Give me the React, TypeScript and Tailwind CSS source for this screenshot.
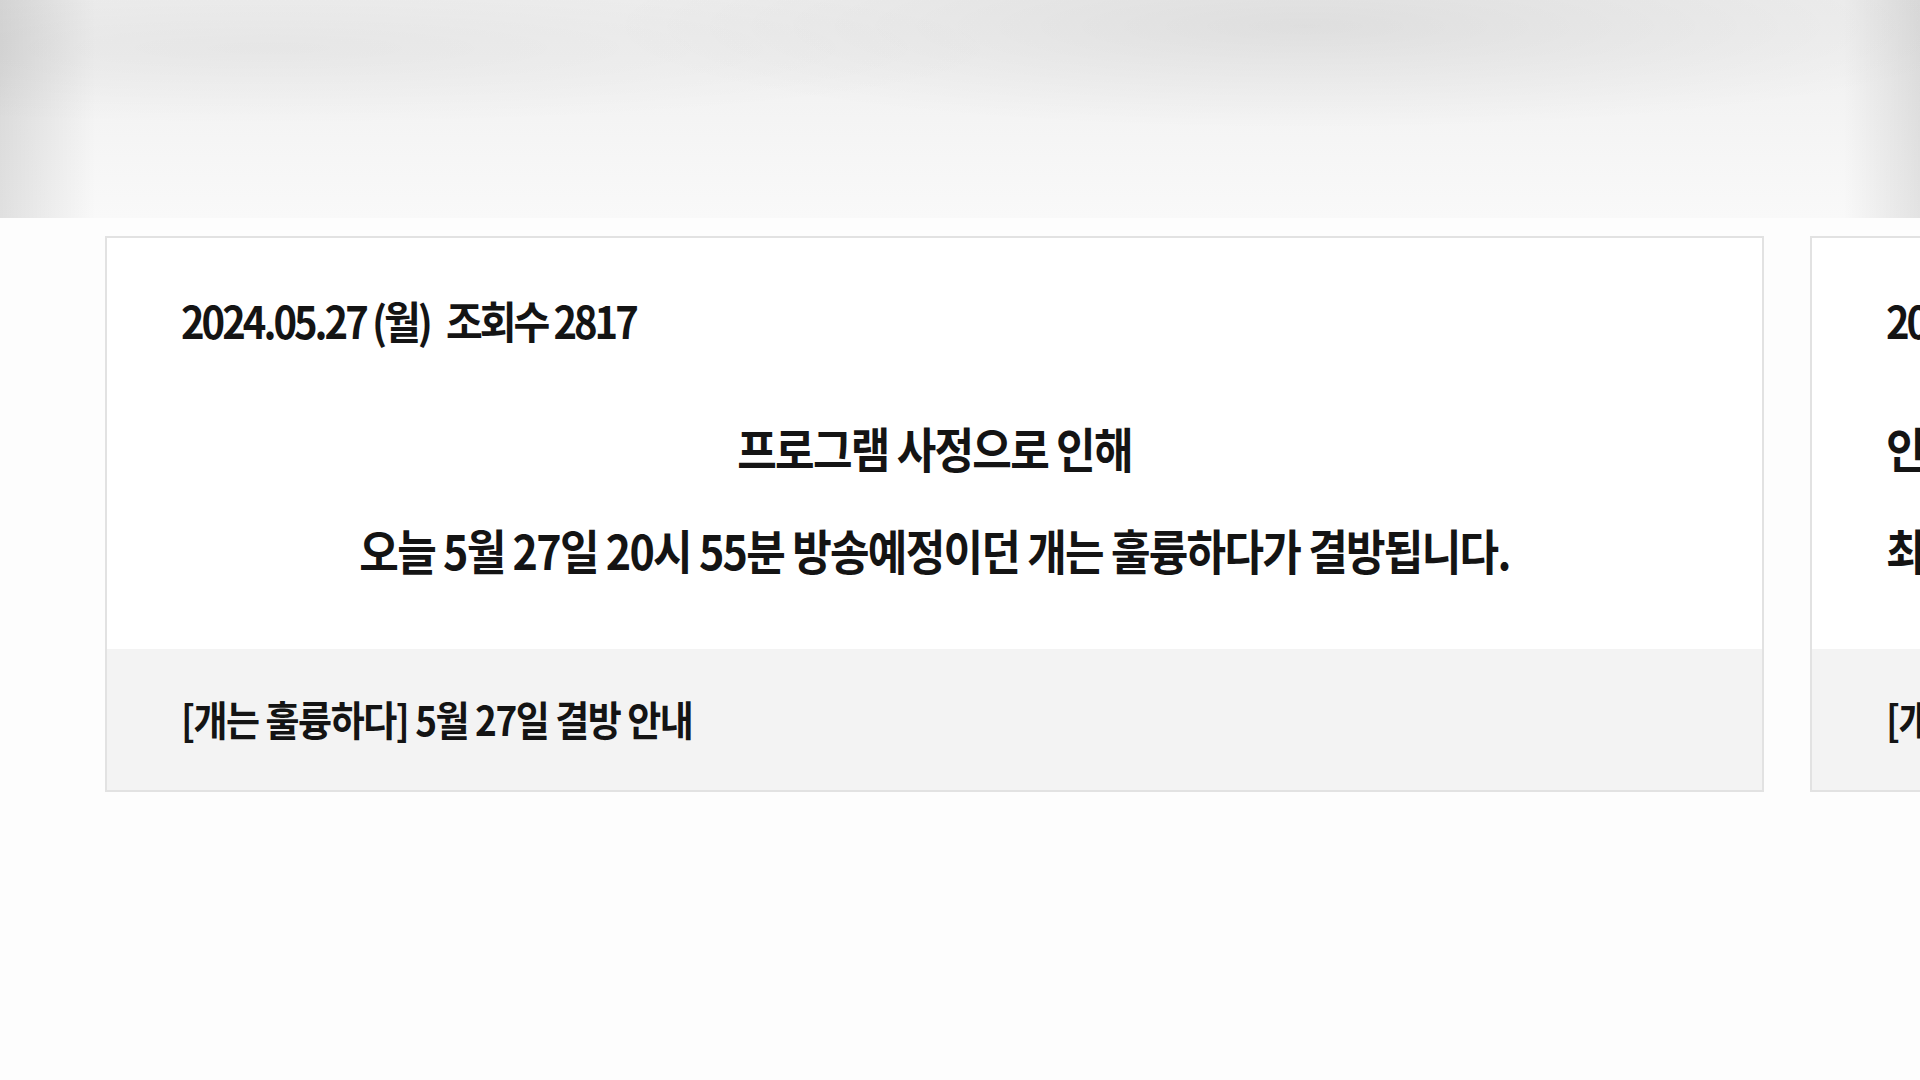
const font = "font-['Noto_Sans_CJK_KR','Noto_Sans',sans-serif]";

interface Notice {
  date: string;
  views: number;
  lines: string[];
  title: string;
  alignStart?: boolean;
}

const notices: Notice[] = [
  {
    date: '2024.05.27 (월)',
    views: 2817,
    lines: ['프로그램 사정으로 인해', '오늘 5월 27일 20시 55분 방송예정이던 개는 훌륭하다가 결방됩니다.'],
    title: '[개는 훌륭하다] 5월 27일 결방 안내',
  },
  {
    date: '2024.05.20 (월)',
    views: 3104,
    lines: ['인천 지역 특집 방송 편성으로 인해', '최근 공지된 방송 일정이 일부 변경되었으니 시청에 참고 부탁드립니다.'],
    title: '[개는 훌륭하다] 방송 시간 변경 안내',
    alignStart: true,
  },
];

function NoticeCard({ notice }: { notice: Notice }) {
  return (
    <div className="w-[1659px] shrink-0 border-2 border-[#e2e2e2] bg-white flex flex-col">
      {/* body */}
      <div className="h-[411px] px-[74px] pt-[58px]">
        <div className="flex text-[40px] leading-[48px] font-bold tracking-[-0.075em] text-[#141414] scale-y-110 origin-left whitespace-nowrap">
          <span>{notice.date}</span>
          <span className="ml-[16px]">조회수 {notice.views}</span>
        </div>
        <div
          className={`mt-[79px] flex flex-col gap-[54px] text-[43px] leading-[48px] font-bold tracking-[-0.04em] text-[#141414] ${
            notice.alignStart ? 'items-start' : 'items-center'
          }`}
        >
          {notice.lines.map((line) => (
            <p key={line} className="scale-y-110 whitespace-nowrap">{line}</p>
          ))}
        </div>
      </div>
      {/* footer */}
      <div className="h-[141px] bg-[#f3f3f3] px-[74px] flex items-center pb-[2px]">
        <span className="text-[37px] font-bold tracking-[-0.04em] text-[#141414] scale-y-110 origin-left whitespace-nowrap">
          {notice.title}
        </span>
      </div>
    </div>
  );
}

export default function App() {
  return (
    <div className={`w-[1920px] h-[1080px] overflow-hidden bg-[#fdfdfd] ${font}`}>
      <div className="h-[218px] bg-[radial-gradient(ellipse_at_68%_12%,rgba(0,0,0,0.07),transparent_38%),radial-gradient(ellipse_at_14%_22%,rgba(0,0,0,0.045),transparent_32%),linear-gradient(90deg,rgba(0,0,0,0.1),transparent_5%,transparent_96%,rgba(0,0,0,0.09)),linear-gradient(180deg,#eeeeee,#f9f9f9)]" />
      <div className="pt-[18px] pl-[105px] flex gap-[46px]">
        {notices.map((n) => (
          <NoticeCard key={n.date} notice={n} />
        ))}
      </div>
    </div>
  );
}
